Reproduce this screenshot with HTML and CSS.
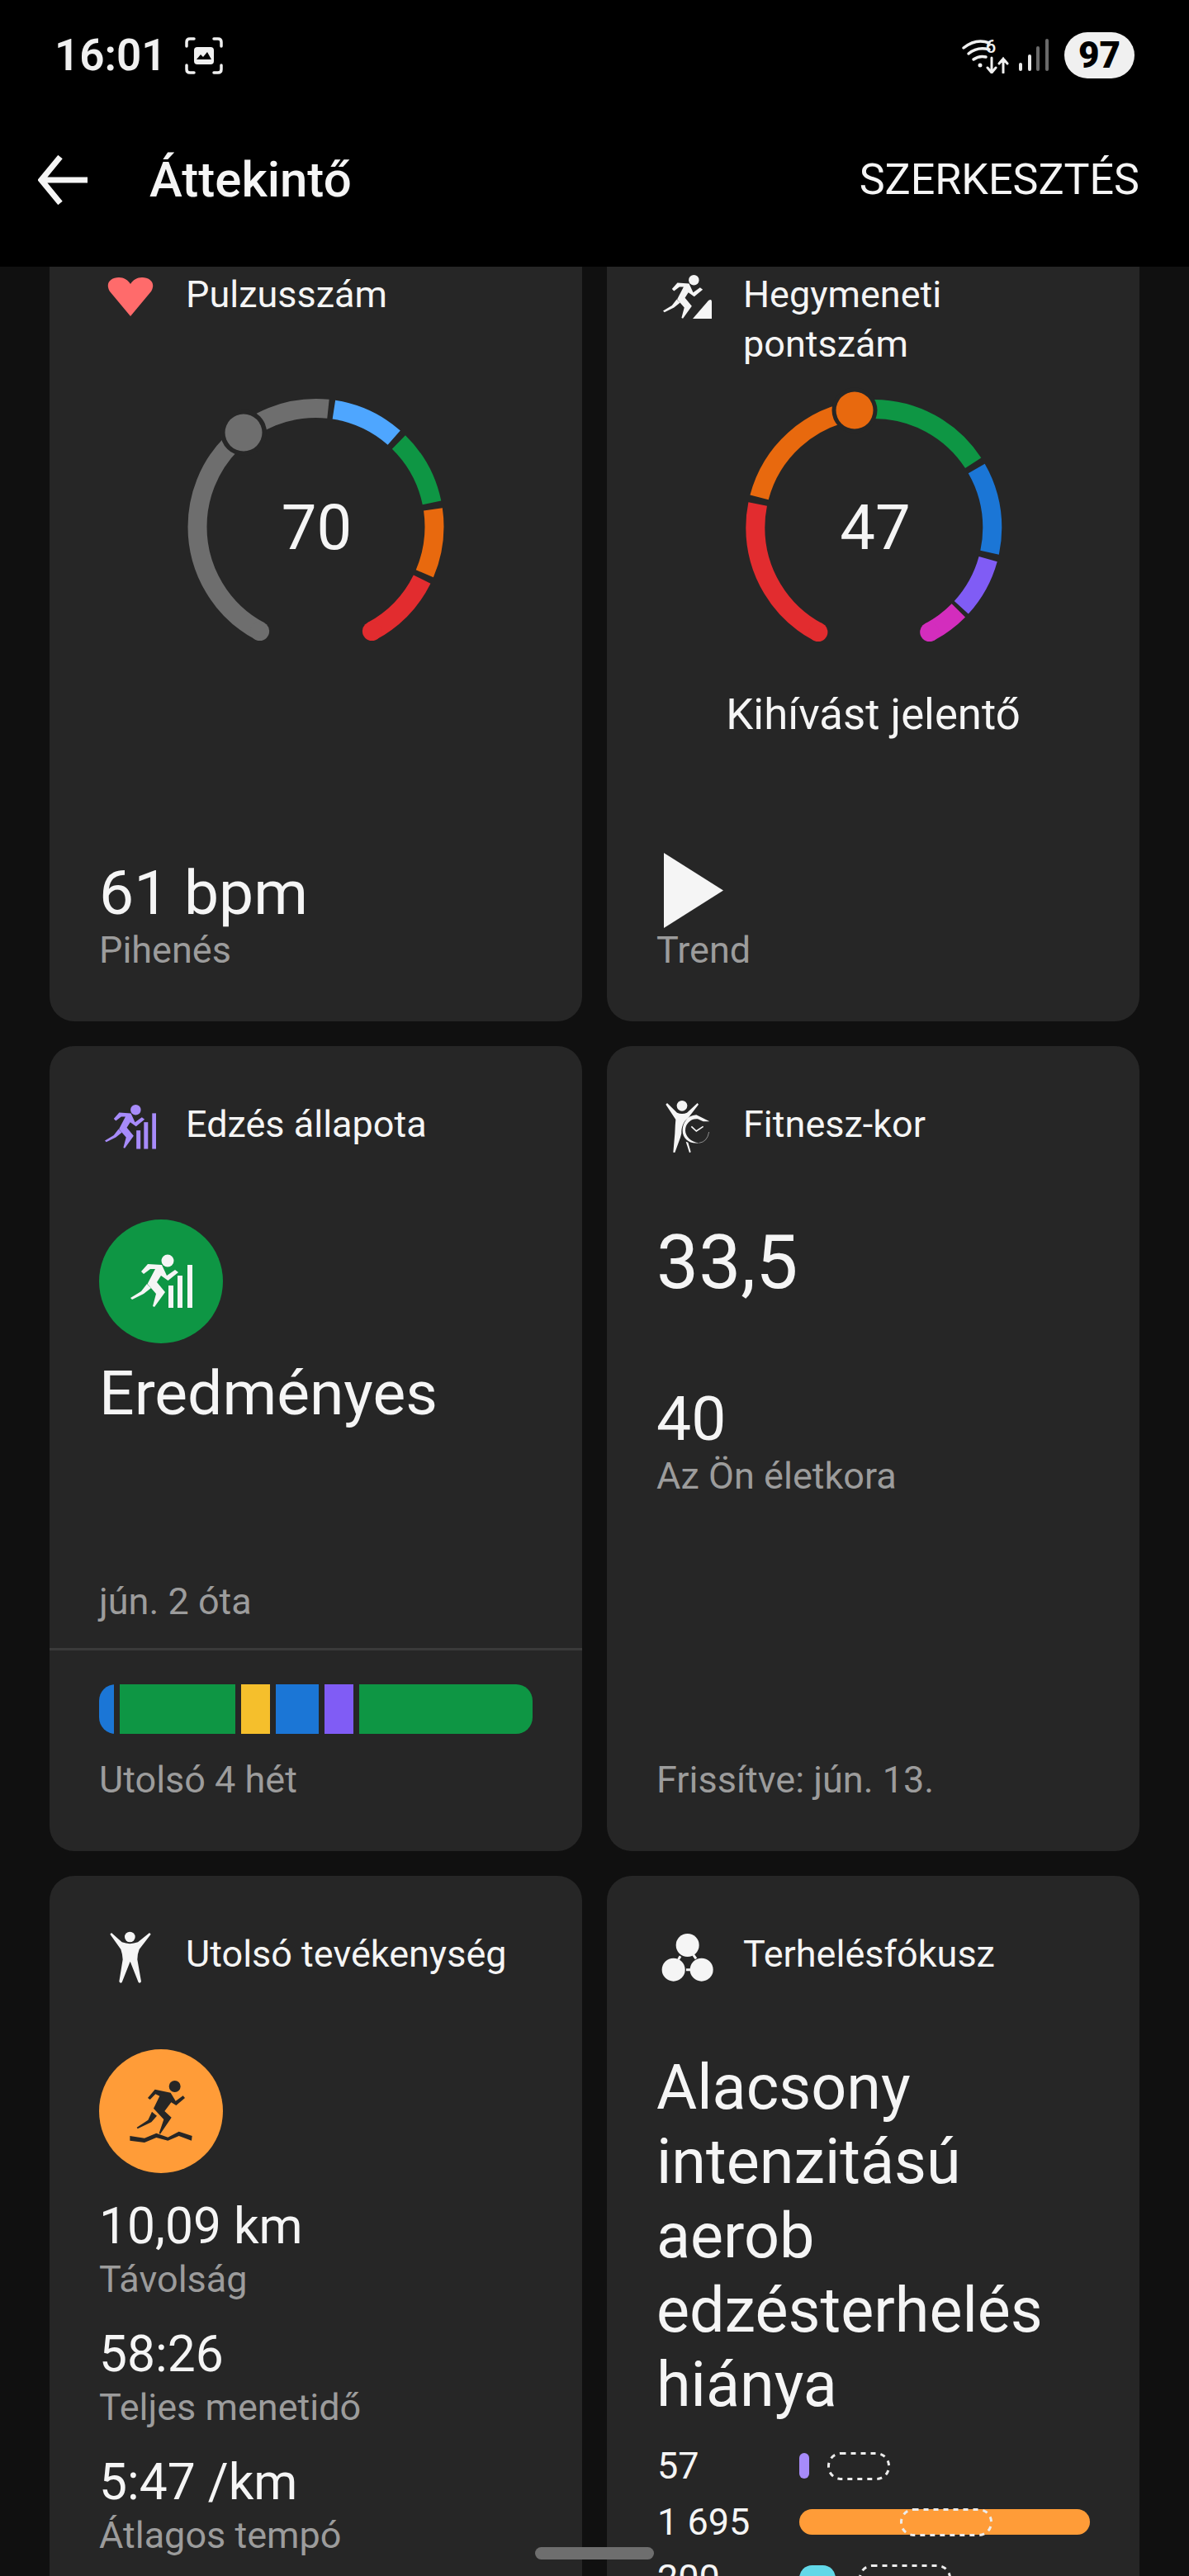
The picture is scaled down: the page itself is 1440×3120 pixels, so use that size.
FILE: index.html
```html
<!DOCTYPE html>
<html lang="hu">
<head>
<meta charset="utf-8">
<title>Áttekintő</title>
<link rel="stylesheet" href="styles.css">
</head>
<body>
<svg class="defs" aria-hidden="true">
  <defs>
    <g id="runner">
      <circle cx="83" cy="50" r="7.5"/>
      <path d="M51 63 59 54 76 55 82 68 92 61 96 64 83.500 74 75 68 70 76 80 88 67 106 65 105 69 90 58.600 78 68 60 62 60 54 66Z"/>
      <path d="M58 78 63 83 54 90 40 97 38 95 51 87Z"/>
    </g>
    <g id="bars">
      <rect x="84" y="80" width="6" height="27"/>
      <rect x="95" y="68" width="6" height="39"/>
      <rect x="107" y="55" width="6" height="52"/>
    </g>
  </defs>
</svg>

<header class="topbar">
  <div class="status">
    <div class="status-left">
      <span class="clock">16:01</span>
      <svg class="shot" viewBox="0 0 46 45" fill="none" stroke="#f0f0f0" stroke-width="3.500" stroke-linecap="round">
        <path d="M2 11V6Q2 2 6 2H11M35 2H40Q44 2 44 6V11M44 34V39Q44 43 40 43H35M11 43H6Q2 43 2 39V34"/>
        <rect x="11" y="12" width="24" height="21" rx="4" fill="#f0f0f0" stroke="none"/>
        <path d="M14 27 19 21 22 24 27 18 32 27Z" fill="#000" stroke="none"/>
      </svg>
    </div>
    <div class="status-right">
      <svg class="wifi" viewBox="0 -8 58 50" fill="none" stroke="#f0f0f0" stroke-linecap="round">
        <path stroke-width="3.500" d="M2 11Q17 -1 33 5"/>
        <path stroke-width="3.500" d="M8 18Q19 9 33 13"/>
        <path stroke-width="3.500" d="M14 25Q21 20 29 22"/>
        <circle cx="22" cy="32" r="2.500" fill="#f0f0f0" stroke="none"/>
        <text class="wifi-six" x="35" y="17">6</text>
        <path stroke-width="3" d="M36 23V40M31 35 36 41 41 35M50 41V24M45 30 50 24 55 30"/>
      </svg>
      <svg class="signal" viewBox="0 0 36 40" stroke-width="4" stroke-linecap="round">
        <path stroke="#e8e8e8" d="M2 31V37M13 21V37"/>
        <path stroke="#6a6a6a" d="M23 11V37M34 2V37"/>
      </svg>
      <span class="battery">97</span>
    </div>
  </div>
  <div class="appbar">
    <svg class="back" viewBox="0 0 60 60" fill="none" stroke="#f5f5f5" stroke-width="7">
      <path d="M60 30H5M27 2 4 30 27 58"/>
    </svg>
    <h1 class="title">Áttekintő</h1>
    <span class="edit">SZERKESZTÉS</span>
  </div>
</header>

<main class="viewport">
  <div class="grid">

    <section class="card">
      <div class="card-head tall">
        <span class="card-icon">
          <svg class="i-heart" viewBox="0 0 56 47"><path d="M28 47 3 17C-3 7 4 0 14 0 20 0 25 3 28 8 31 3 36 0 42 0 52 0 59 7 53 17Z"/></svg>
        </span>
        <span class="card-label">Pulzusszám</span>
      </div>
      <svg class="gauge" viewBox="0 0 525 340">
        <g transform="translate(262.500 178) rotate(90)">
          <circle class="arc" r="143.500" pathLength="360" stroke="#6e6e6e" stroke-dasharray="158 720" stroke-dashoffset="-28"/>
          <circle class="arc" r="143.500" pathLength="360" stroke="#4ea6ff" stroke-dasharray="32.500 720" stroke-dashoffset="-188.800"/>
          <circle class="arc" r="143.500" pathLength="360" stroke="#0e9644" stroke-dasharray="33.900 720" stroke-dashoffset="-224.400"/>
          <circle class="arc" r="143.500" pathLength="360" stroke="#e8690e" stroke-dasharray="31.800 720" stroke-dashoffset="-261.500"/>
          <circle class="arc" r="143.500" pathLength="360" stroke="#e22c2f" stroke-dasharray="35.500 720" stroke-dashoffset="-296.300"/>
        </g>
        <circle cx="194.600" cy="304.500" r="11.500" fill="#6e6e6e"/>
        <circle cx="330.400" cy="304.500" r="11.500" fill="#e22c2f"/>
        <circle cx="175" cy="64" r="28" fill="#262626"/>
        <circle cx="175" cy="64" r="22.500" fill="#6e6e6e"/>
        <text class="gauge-value" x="263.500" y="205">70</text>
      </svg>
      <div class="foot">
        <div class="value-lg">61 bpm</div>
        <div class="muted">Pihenés</div>
      </div>
    </section>

    <section class="card">
      <div class="card-head tall">
        <span class="card-icon">
          <svg class="i-hill" viewBox="0 0 60 54">
            <use href="#runner" transform="scale(.83) translate(-38 -42.500)"/>
            <path d="M36 53 55 31Q59 28 59 33V53Z"/>
          </svg>
        </span>
        <span class="card-label">Hegymeneti pontszám</span>
      </div>
      <svg class="gauge" viewBox="0 0 525 340">
        <g transform="translate(263.300 179) rotate(90)">
          <circle class="arc" r="143.500" pathLength="360" stroke="#e22c2f" stroke-dasharray="73.500 720" stroke-dashoffset="-28"/>
          <circle class="arc" r="143.500" pathLength="360" stroke="#e8690e" stroke-dasharray="66 720" stroke-dashoffset="-104.800"/>
          <circle class="arc" r="143.500" pathLength="360" stroke="#0e9644" stroke-dasharray="61 720" stroke-dashoffset="-176"/>
          <circle class="arc" r="143.500" pathLength="360" stroke="#1b76d6" stroke-dasharray="42.100 720" stroke-dashoffset="-240.100"/>
          <circle class="arc" r="143.500" pathLength="360" stroke="#805cf5" stroke-dasharray="27 720" stroke-dashoffset="-285.400"/>
          <circle class="arc" r="143.500" pathLength="360" stroke="#d32dbd" stroke-dasharray="17.600 720" stroke-dashoffset="-314.400"/>
        </g>
        <circle cx="195.900" cy="305.500" r="11.500" fill="#e22c2f"/>
        <circle cx="330.700" cy="305.500" r="11.500" fill="#d32dbd"/>
        <circle cx="240" cy="37" r="27.500" fill="#262626"/>
        <circle cx="240" cy="37" r="22.500" fill="#e8690e"/>
        <text class="gauge-value" x="265" y="205">47</text>
      </svg>
      <div class="gauge-caption">Kihívást jelentő</div>
      <div class="foot">
        <svg class="play" viewBox="0 0 72 91"><path d="M0 0 72 45.500 0 91Z"/></svg>
        <div class="muted">Trend</div>
      </div>
    </section>

    <section class="card">
      <div class="card-head">
        <span class="card-icon">
          <svg class="i-status" viewBox="0 0 62 54">
            <g transform="scale(.83) translate(-38 -42.500)"><use href="#runner"/><use href="#bars"/></g>
          </svg>
        </span>
        <span class="card-label">Edzés állapota</span>
      </div>
      <div class="badge badge-green">
        <svg viewBox="0 0 150 150" class="badge-art"><use href="#runner"/><use href="#bars"/></svg>
      </div>
      <div class="value-xl">Eredményes</div>
      <div class="foot">
        <div class="muted">jún. 2 óta</div>
        <div class="divider"></div>
        <div class="weeks">
          <span class="wk blue w1"></span>
          <span class="wk green w8"></span>
          <span class="wk yellow w2"></span>
          <span class="wk blue w3"></span>
          <span class="wk purple w2"></span>
          <span class="wk green w12"></span>
        </div>
        <div class="muted weeks-label">Utolsó 4 hét</div>
      </div>
    </section>

    <section class="card">
      <div class="card-head">
        <span class="card-icon">
          <svg class="i-fit" viewBox="78 96 162 192">
            <circle cx="138" cy="115" r="19"/>
            <path d="M79 110 84 105 120 140Q138 148 156 140L194 105 198 110 160 160C142 172 135 195 136 215L132 230 112 285 106 284 112 215Q113 185 115 165Z"/>
            <path d="M152 245 160 248 170 283 165 286Z"/>
            <path d="M238 172 190 148C155 150 140 180 140 205 140 235 165 255 200 250 170 248 150 225 150 205 150 180 170 160 195 163L215 172Z"/>
            <path d="M200 250Q230 246 236 210" fill="none" stroke="#f5f5f5" stroke-width="1.500"/>
            <path d="M172 190 190 207 215 190" fill="none" stroke="#f5f5f5" stroke-width="5"/>
          </svg>
        </span>
        <span class="card-label">Fitnesz-kor</span>
      </div>
      <div class="fit-age">33,5</div>
      <div class="value-lg real-age">40</div>
      <div class="muted">Az Ön életkora</div>
      <div class="foot">
        <div class="muted">Frissítve: jún. 13.</div>
      </div>
    </section>

    <section class="card">
      <div class="card-head">
        <span class="card-icon">
          <svg class="i-person" viewBox="218 112 150 192">
            <circle cx="291" cy="133" r="19"/>
            <path d="M219 123 224 118 262 152Q291 163 320 152L362 118 367 123 325 178Q318 195 318 215L332 295Q328 303 322 298L292 222 262 298Q256 303 252 295L265 215Q264 195 258 178Z"/>
          </svg>
        </span>
        <span class="card-label">Utolsó tevékenység</span>
      </div>
      <div class="badge badge-orange">
        <svg viewBox="180 545 450 450" class="badge-art dark">
          <circle cx="455" cy="680" r="21"/>
          <path d="M357 722 383 691 440 703 458 733 485 714 492 722 460 749 442 738 418 770 443 793 402 853 398 850 415 800 378 760 400 715 385 708 365 728Z"/>
          <path d="M372 772 390 787 370 810 320 834 317 829 358 802Z"/>
          <path d="M292 860 345 868 388 850 430 865 470 844 518 860 516 877 470 860 430 877 388 866 345 884 292 877Z"/>
        </svg>
      </div>
      <div class="stats">
        <div class="stat"><div class="stat-value">10,09 km</div><div class="muted">Távolság</div></div>
        <div class="stat"><div class="stat-value">58:26</div><div class="muted">Teljes menetidő</div></div>
        <div class="stat"><div class="stat-value">5:47 /km</div><div class="muted">Átlagos tempó</div></div>
      </div>
    </section>

    <section class="card">
      <div class="card-head">
        <span class="card-icon">
          <svg class="i-focus" viewBox="62 58 192 180">
            <circle cx="157" cy="103" r="42"/>
            <circle cx="106" cy="192" r="42"/>
            <circle cx="208" cy="192" r="42"/>
            <path d="M131 143 124 155M178 138 188 152M152 192H168" stroke="#f5f5f5" stroke-width="9" fill="none"/>
          </svg>
        </span>
        <span class="card-label">Terhelésfókusz</span>
      </div>
      <div class="focus-text">Alacsony intenzitású aerob edzésterhelés hiánya</div>
      <div class="load-row">
        <span class="load-num">57</span>
        <div class="track">
          <span class="fill purple-light" style="width:12px"></span>
          <svg class="range" style="left:34px;width:76px" viewBox="0 0 76 34"><rect x="1.500" y="1.500" width="73" height="31" rx="15"/></svg>
        </div>
      </div>
      <div class="load-row">
        <span class="load-num">1 695</span>
        <div class="track">
          <span class="fill orange" style="width:352px"></span>
          <svg class="range" style="left:122px;width:112px" viewBox="0 0 112 34"><rect x="1.500" y="1.500" width="109" height="31" rx="15"/></svg>
        </div>
      </div>
      <div class="load-row">
        <span class="load-num">200</span>
        <div class="track">
          <span class="fill cyan" style="width:44px"></span>
          <svg class="range" style="left:72px;width:112px" viewBox="0 0 112 34"><rect x="1.500" y="1.500" width="109" height="31" rx="15"/></svg>
        </div>
      </div>
    </section>

  </div>
</main>
<div class="home-pill"></div>
</body>
</html>
```

FILE: styles.css
```css
* { box-sizing: border-box; }

html, body {
  margin: 0;
  height: 3120px;
  overflow: hidden;
  background: #101010;
  color: #f5f5f5;
  font-family: Roboto, "Liberation Sans", sans-serif;
}

body { position: relative; display: flex; flex-direction: column; }

.defs { width: 0; height: 0; position: absolute; }

/* top bar */
.topbar {
  position: relative;
  z-index: 2;
  height: 323px;
  flex: none;
  background: #000;
}

.status {
  height: 134px;
  padding: 39px 66px 0 66px;
  display: flex;
  justify-content: space-between;
  align-items: flex-start;
}

.status-left { display: flex; align-items: center; gap: 22px; height: 56px; }

.clock { font-size: 53px; font-weight: 600; line-height: 56px; color: #f0f0f0; }

.shot { width: 46px; height: 45px; }

.status-right { display: flex; align-items: flex-start; }

.wifi { width: 58px; height: 50px; }

.wifi-six { font-size: 22px; font-weight: 500; fill: #f0f0f0; stroke: none; text-anchor: middle; }

.signal { width: 36px; height: 40px; margin: 8px 19px 0 11px; }

.battery {
  width: 85px;
  height: 56px;
  border-radius: 28px;
  background: #f0f0f0;
  color: #000;
  font-size: 44px;
  font-weight: 900;
  line-height: 56px;
  text-align: center;
}

.appbar {
  height: 168px;
  padding: 0 60px 0 46px;
  display: flex;
  align-items: center;
}

.back { width: 60px; height: 60px; flex: none; }

.title {
  margin: 0 0 0 75px;
  font-size: 60px;
  font-weight: 500;
  line-height: 64px;
  flex: 1;
}

.edit { font-size: 52px; font-weight: 400; line-height: 64px; }

/* scrolled content */
.viewport { flex: 1; min-height: 0; overflow: hidden; }

.grid {
  margin-top: -61px;
  padding: 0 60px;
  display: grid;
  grid-template-columns: 645px 645px;
  grid-auto-rows: 975px;
  gap: 30px;
}

.card {
  background: #262626;
  border-radius: 30px;
  padding: 65px 60px 60px;
  display: flex;
  flex-direction: column;
  min-width: 0;
}

.card-head { display: flex; align-items: flex-start; min-height: 60px; }

.card-head.tall { min-height: 120px; }

.card-icon {
  width: 105px;
  flex: none;
  height: 60px;
  display: block;
}

.card-icon svg { display: block; fill: #f5f5f5; }

.card-label { font-size: 45px; line-height: 60px; }

.i-heart { width: 56px; height: 47px; margin: 9px 0 0 10px; fill: #ff6b6b !important; }
.i-hill { width: 60px; height: 54px; margin: 6px 0 0 8px; }
.i-status { width: 62px; height: 54px; margin: 6px 0 0 7px; fill: #a78bfa !important; }
.i-fit { width: 54px; height: 64px; margin: 1px 0 0 11px; }
.i-person { width: 50px; height: 64px; margin: 2px 0 0 13px; }
.i-focus { width: 64px; height: 60px; margin: 4px 0 0 6px; }

/* gauges */
.gauge { display: block; width: 525px; height: 340px; margin-top: 13px; flex: none; }

.arc { fill: none; stroke-width: 23; }

.gauge-value { font-size: 76px; text-anchor: middle; fill: #f5f5f5; }

.gauge-caption {
  margin-top: 35px;
  text-align: center;
  font-size: 52.700px;
  line-height: 60px;
}

.foot { margin-top: auto; }

.value-lg { font-size: 75px; line-height: 76px; margin-bottom: 6px; }

.muted { font-size: 45px; line-height: 52px; color: #9c9c9c; }

.play { display: block; width: 72px; height: 91px; margin: 0 0 1px 9px; fill: #f5f5f5; }

/* status card */
.badge { width: 150px; height: 150px; border-radius: 50%; margin-top: 85px; flex: none; }
.badge-green { background: #0e9644; }
.badge-orange { background: #ff9c38; }
.badge-art { display: block; width: 150px; height: 150px; fill: #f5f5f5; }
.badge-art.dark { fill: #262626; }

.value-xl { font-size: 75px; line-height: 84px; margin-top: 18px; }

.divider { height: 3px; background: #3a3a3a; margin: 30px -60px 0; }

.weeks {
  display: flex;
  gap: 7px;
  height: 60px;
  margin-top: 41px;
  border-radius: 20px;
  overflow: hidden;
}

.wk { display: block; }
.w1 { flex: 1; }
.w2 { flex: 2; }
.w3 { flex: 3; }
.w8 { flex: 8; }
.w12 { flex: 12; }
.blue { background: #1b76d6; }
.green { background: #0e9644; }
.yellow { background: #f5bf2c; }
.purple { background: #805cf5; }

.weeks-label { margin-top: 30px; }

/* fitness age */
.fit-age { font-size: 91px; line-height: 100px; margin-top: 87px; }

.real-age { margin-top: 101px; }

/* last activity */
.stats { margin-top: 33px; display: flex; flex-direction: column; gap: 33px; }

.stat-value { font-size: 60.500px; line-height: 64px; margin-bottom: 6px; }

/* load focus */
.focus-text { font-size: 75.500px; line-height: 90px; margin: 86px 0 20px; }

.load-row { display: flex; height: 68px; flex: none; }

.load-num { width: 172px; margin-left: 1px; font-size: 45px; line-height: 68px; }

.track { position: relative; width: 352px; height: 31px; margin-top: 18px; }

.fill { display: block; height: 31px; border-radius: 15.500px; }
.purple-light { background: #a78bfa; border-radius: 6px; }
.orange { background: #ff9c38; }
.cyan { background: #62d8e8; }

.range { position: absolute; top: -1.500px; height: 34px; fill: none; }
.range rect { stroke: #ececec; stroke-width: 3; stroke-dasharray: 6 6; }

.home-pill {
  position: absolute;
  left: 648px;
  top: 3085px;
  width: 144px;
  height: 15px;
  border-radius: 8px;
  background: #6e6e6e;
}
```
